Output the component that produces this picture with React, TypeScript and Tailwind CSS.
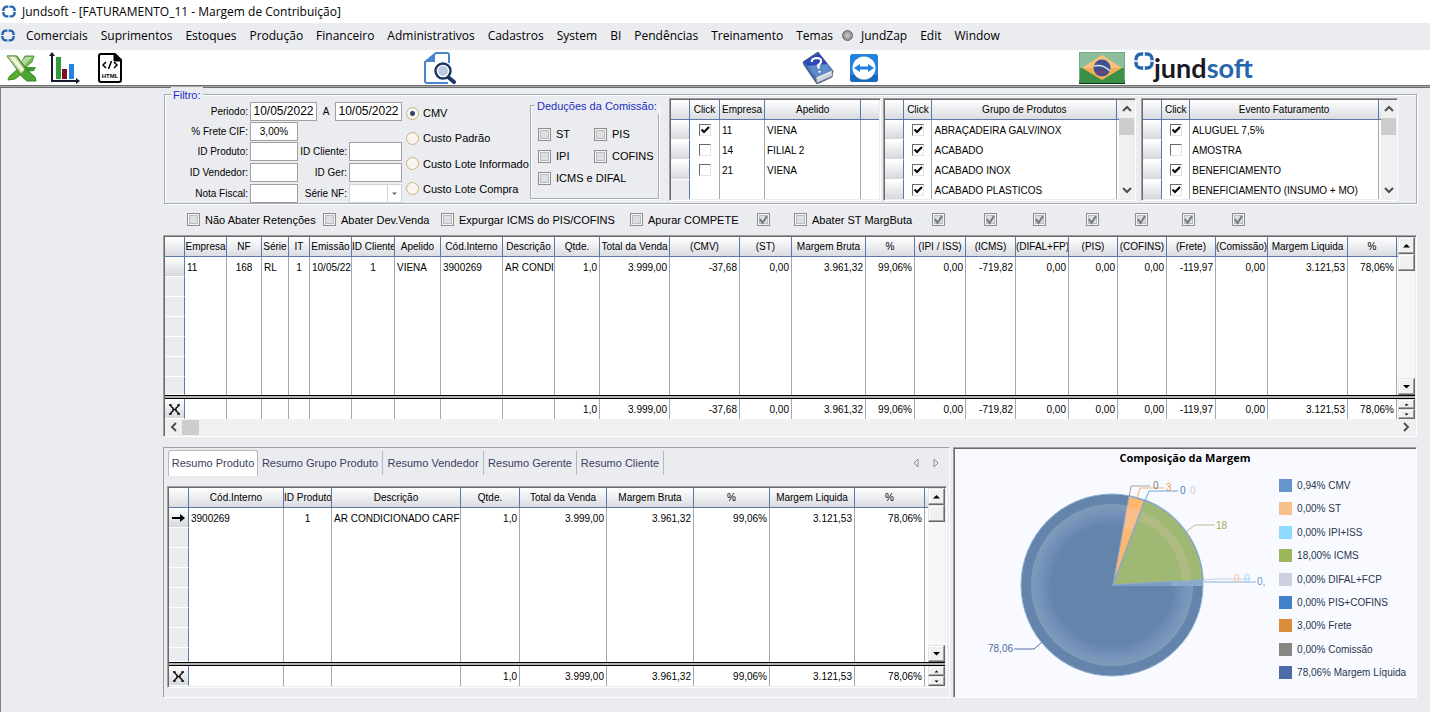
import { useId, type ReactNode } from 'react';
import clsx from 'clsx';

interface Column {
  title: string;
  width: string;
  align?: 'left' | 'center' | 'right';
}

interface DataGridProps {
  columns: Column[];
  rows: string[][];
  totals: string[];
  blankRows: number;
  lastRow: string;
  pointer?: boolean;
  horizontal?: boolean;
}

interface PickListProps {
  name: string;
  columns: Column[];
  rows: { checked: boolean; cells: string[] }[];
  scroll?: boolean;
  className: string;
}

const sunken =
  'border border-t-[#a0a0a0] border-l-[#a0a0a0] border-b-white border-r-white p-px shadow-[inset_1px_1px_0_#696969]';
const sans = 'font-["Liberation_Sans",sans-serif]';
const headCell =
  'h-5 overflow-hidden border-b border-r border-b-[#5b79a8] border-r-[#5b79a8] bg-linear-to-b from-white to-[#dadce1] p-0 text-center font-normal leading-[19px] whitespace-nowrap';
const bodyCell = 'overflow-hidden border-r border-[#a0a8b6] px-[2px] pt-px pb-0 leading-[19px] whitespace-nowrap';
const alignment = { left: 'text-left', center: 'text-center', right: 'text-right' };

const menu = [
  'Comerciais', 'Suprimentos', 'Estoques', 'Produção', 'Financeiro', 'Administrativos',
  'Cadastros', 'System', 'BI', 'Pendências', 'Treinamento', 'Temas',
];

const salesColumns: Column[] = [
  { title: 'Empresa', width: 'w-[42px]', align: 'left' },
  { title: 'NF', width: 'w-[35px]', align: 'center' },
  { title: 'Série', width: 'w-[27px]', align: 'left' },
  { title: 'IT', width: 'w-[21px]', align: 'center' },
  { title: 'Emissão', width: 'w-[42px]', align: 'left' },
  { title: 'ID Cliente', width: 'w-[43px]', align: 'center' },
  { title: 'Apelido', width: 'w-[46px]', align: 'left' },
  { title: 'Cód.Interno', width: 'w-[62px]', align: 'left' },
  { title: 'Descrição', width: 'w-[52px]', align: 'left' },
  { title: 'Qtde.', width: 'w-[45px]' },
  { title: 'Total da Venda', width: 'w-[70px]' },
  { title: '(CMV)', width: 'w-[70px]' },
  { title: '(ST)', width: 'w-[52px]' },
  { title: 'Margem Bruta', width: 'w-[74px]' },
  { title: '%', width: 'w-[49px]' },
  { title: '(IPI / ISS)', width: 'w-[51px]' },
  { title: '(ICMS)', width: 'w-[50px]' },
  { title: '(DIFAL+FP)', width: 'w-[53px]' },
  { title: '(PIS)', width: 'w-[49px]' },
  { title: '(COFINS)', width: 'w-[49px]' },
  { title: '(Frete)', width: 'w-[49px]' },
  { title: '(Comissão)', width: 'w-[52px]' },
  { title: 'Margem Liquida', width: 'w-[80px]' },
  { title: '%', width: 'w-[49px]' },
];

const salesValues = [
  '1,0', '3.999,00', '-37,68', '0,00', '3.961,32', '99,06%', '0,00', '-719,82',
  '0,00', '0,00', '0,00', '-119,97', '0,00', '3.121,53', '78,06%',
];

const productColumns: Column[] = [
  { title: 'Cód.Interno', width: 'w-[95px]', align: 'left' },
  { title: 'ID Produto', width: 'w-[48px]', align: 'center' },
  { title: 'Descrição', width: 'w-[129px]', align: 'left' },
  { title: 'Qtde.', width: 'w-[59px]' },
  { title: 'Total da Venda', width: 'w-[87px]' },
  { title: 'Margem Bruta', width: 'w-[87px]' },
  { title: '%', width: 'w-[76px]' },
  { title: 'Margem Liquida', width: 'w-[85px]' },
  { title: '%', width: 'w-[70px]' },
];

const productValues = ['1,0', '3.999,00', '3.961,32', '99,06%', '3.121,53', '78,06%'];

const legend = [
  { label: '0,94% CMV', color: 'bg-[#6796cf]' },
  { label: '0,00% ST', color: 'bg-[#f9bf8a]' },
  { label: '0,00% IPI+ISS', color: 'bg-[#8fdbff]' },
  { label: '18,00% ICMS', color: 'bg-[#9fb75c]' },
  { label: '0,00% DIFAL+FCP', color: 'bg-[#cbd1df]' },
  { label: '0,00% PIS+COFINS', color: 'bg-[#4083ca]' },
  { label: '3,00% Frete', color: 'bg-[#da8d39]' },
  { label: '0,00% Comissão', color: 'bg-[#868885]' },
  { label: '78,06% Margem Líquida', color: 'bg-[#4e6ca6]' },
];

function RingMark({ className }: { className: string }) {
  return (
    <svg viewBox="0 0 20 18" className={className} fill="none" stroke="#2565ae" strokeWidth="3.4">
      <path d="M9.200 2H7a5 5 0 0 0-5 5v1.200M10.800 2H13a5 5 0 0 1 5 5v1.200M9.200 16H7a5 5 0 0 1-5-5V9.800M10.800 16H13a5 5 0 0 0 5-5V9.800" />
    </svg>
  );
}

function ExcelIcon() {
  return (
    <svg viewBox="0 0 32 32" className="size-8">
      <path d="M20 4h9l-2 6-6 5H14z" fill="#7cb862" stroke="#4c9a34" />
      <path d="M21 5h6L17 16l-4-3z" fill="#b7d9a0" />
      <path d="M19 15h12l-2 4-8 1z" fill="#3f9a35" />
      <path d="M15 15l4 5-9 7-7 1q0-3 3-5z" fill="#5dad2c" stroke="#3d8d24" />
      <path d="M2 4h10l10 14 8 7 1 4h-9q-5-3-9-10z" fill="#4aa52e" stroke="#2d8426" />
      <path d="M2 4h9l9 13-4 5z" fill="#c6dba6" stroke="#76a155" />
      <path d="M5 5h4l10 13-2 2z" fill="#f3f6dd" />
    </svg>
  );
}

function ChartIcon() {
  return (
    <svg viewBox="0 0 32 32" className="size-8">
      <path d="M8 5h5v22H8z" fill="#2f9e38" />
      <path d="M14 17h5v10h-5z" fill="#7d1027" />
      <path d="M21 12h5v15h-5z" fill="#2386dc" />
      <path d="M4 3v26h25" fill="none" stroke="#151b2b" strokeWidth="2" />
      <path d="M1 4l3-4 3 4zM28 26l4 3-4 3z" fill="#151b2b" />
    </svg>
  );
}

function HtmlIcon() {
  return (
    <svg viewBox="0 0 24 32" className="h-8 w-6">
      <path d="M3 2h14l6 6v20q0 2-2 2H3q-2 0-2-2V4q0-2 2-2z" fill="#fff" stroke="#000" strokeWidth="2" />
      <path d="M16 2v7h7" fill="#000" stroke="#000" />
      <path d="M8 10l-3 3 3 3M16 10l3 3-3 3M13.500 9l-3 8" fill="none" stroke="#000" strokeWidth="1.500" />
      <text x="12" y="26" textAnchor="middle" fontSize="6" fontWeight="700" fontFamily="Liberation Sans, sans-serif">HTML</text>
    </svg>
  );
}

function SearchPageIcon() {
  return (
    <svg viewBox="0 0 32 32" className="size-8">
      <path d="M25 11V3q0-2-2-2h-11L1 10v19q0 2 2 2h21" fill="#fff" stroke="#4686c9" strokeWidth="2" />
      <path d="M11 1v9H1z" fill="#4686c9" />
      <circle cx="19" cy="19" r="9.500" fill="#fff" />
      <path d="M24 25l6 5" stroke="#1c3765" strokeWidth="4" strokeLinecap="round" />
      <circle cx="19" cy="19" r="7.500" fill="#fff" stroke="#1c3765" strokeWidth="2.400" />
      <circle cx="19" cy="19" r="5" fill="#bccbdc" />
    </svg>
  );
}

function HelpBookIcon() {
  return (
    <svg viewBox="0 0 32 32" className="size-8">
      <path d="M1 10L16 0l15 19-1 6-15 7L2 13z" fill="#4570b8" stroke="#333e62" strokeWidth=".8" />
      <path d="M14 25l16-7 .5 6L15 31z" fill="#e3e6ec" stroke="#777c88" strokeWidth=".7" />
      <path d="M2 10L16 1l14 17-16 7z" fill="#2d48b4" />
      <path d="M5 14l20-2 5 6-16 7z" fill="#5f8bc8" />
      <path d="M15 28l15-7M15 30l15-7" stroke="#a7acb7" strokeWidth=".6" />
      <path d="M10 10q-1-3 4-4 6 0 5 4-1 2-3 3.500l1 3M17 19l1 1.500" fill="none" stroke="#fff" strokeWidth="2.200" />
    </svg>
  );
}

function RemoteIcon() {
  return (
    <svg viewBox="0 0 28 28" className="size-7">
      <rect width="28" height="28" rx="3" fill="#2282dc" />
      <path d="M0 21h28v4q0 3-3 3H3q-3 0-3-3z" fill="#1768bb" />
      <circle cx="14" cy="14" r="11.500" fill="#fff" />
      <path d="M4 14l6-4v2.500h8V10l6 4-6 4v-2.500h-8V18z" fill="#1f7fda" />
    </svg>
  );
}

function FlagIcon() {
  return (
    <svg viewBox="0 0 46 32" className="h-8 w-[46px]">
      <rect width="46" height="32" fill="#399046" />
      <path d="M1 1h44v15H1z" fill="#8dbd9c" />
      <path d="M23 3l20 13-20 12L3 16z" fill="#f3ad55" />
      <path d="M23 3l20 13H3z" fill="#f6c37d" />
      <circle cx="23" cy="16" r="8.500" fill="#3f4f8f" />
      <path d="M15 14q9-2 16 5" fill="none" stroke="#dbe4ee" strokeWidth="1.500" />
      <path d="M18 21q5-3 9 0" fill="none" stroke="#8c3d65" strokeWidth="2" />
      <path d="M.5 28V.5h45V28" fill="none" stroke="#76ad86" />
      <path d="M0 31.500h46" stroke="#12301c" />
    </svg>
  );
}

interface CheckProps {
  label?: string;
  name?: string;
  checked?: boolean;
  className?: string;
}

function Check({ label, name, checked = false, className }: CheckProps) {
  return (
    <label className={clsx('flex items-center gap-[5px] text-[11px] leading-4 whitespace-nowrap', className)}>
      <span className="grid size-[13px] shrink-0">
        <input
          type="checkbox"
          defaultChecked={checked}
          aria-label={name}
          className="peer col-start-1 row-start-1 size-[13px] appearance-none border border-[#8e8f8f] bg-[#dcdee0] shadow-[inset_0_0_0_1px_#f4f4f4,inset_0_0_0_2px_#b9bcc0]"
        />
        <svg viewBox="0 0 13 13" className="pointer-events-none invisible col-start-1 row-start-1 peer-checked:visible">
          <path d="M3 6l2.500 4L10 3" fill="none" stroke="#75787c" strokeWidth="2" />
        </svg>
      </span>
      {label}
    </label>
  );
}

function GridCheck({ checked, name }: { checked: boolean; name: string }) {
  return (
    <span className="mx-auto grid size-3">
      <input
        type="checkbox"
        defaultChecked={checked}
        aria-label={name}
        className="peer col-start-1 row-start-1 size-3 appearance-none border border-t-[#696969] border-r-[#e3e3e3] border-b-[#e3e3e3] border-l-[#696969] bg-white"
      />
      <svg viewBox="0 0 12 12" className="pointer-events-none invisible col-start-1 row-start-1 peer-checked:visible">
        <path d="M2.500 5.500l2.500 2.500 5-5" fill="none" stroke="#000" strokeWidth="2" />
      </svg>
    </span>
  );
}

function Arrow({ d, fill = '#000' }: { d: string; fill?: string }) {
  return (
    <svg viewBox="0 0 9 9" className="size-[9px]">
      <path d={d} fill={fill} />
    </svg>
  );
}

const raised =
  'flex items-center justify-center border border-t-[#e3e3e3] border-l-[#e3e3e3] border-b-[#696969] border-r-[#696969] bg-[#f0f0f0] shadow-[inset_-1px_-1px_0_#a0a0a0,inset_1px_1px_0_#fff]';

function ClassicScroll() {
  return (
    <div className="flex w-[17px] shrink-0 flex-col">
      <div className="flex flex-1 flex-col bg-[#f7f7f7]">
        <button type="button" aria-label="Acima" className={clsx(raised, 'h-[17px]')}>
          <Arrow d="M1 6.500L4.500 3 8 6.500z" />
        </button>
        <div className={clsx(raised, 'h-[17px]')} />
        <button type="button" aria-label="Abaixo" className={clsx(raised, 'mt-auto h-[17px]')}>
          <Arrow d="M1 3L4.500 6.500 8 3z" />
        </button>
      </div>
      <div className="h-1 border-y border-black bg-[#b4b4b4]" />
      <button type="button" aria-label="Anterior" className={clsx(raised, 'h-[10px]')}>
        <Arrow d="M2.500 5.500L4.500 3.500 6.500 5.500z" />
      </button>
      <button type="button" aria-label="Próximo" className={clsx(raised, 'h-[10px]')}>
        <Arrow d="M2.500 3.500L4.500 5.500 6.500 3.500z" />
      </button>
    </div>
  );
}

function Chevron({ d }: { d: string }) {
  return (
    <svg viewBox="0 0 10 10" className="size-[10px]">
      <path d={d} fill="none" stroke="#505050" strokeWidth="2" />
    </svg>
  );
}

function DataGrid({ columns, rows, totals, blankRows, lastRow, pointer, horizontal }: DataGridProps) {
  const selector = 'border-r border-r-[#5b79a8] border-b border-b-white p-0';

  return (
    <div className={clsx(sunken, sans, 'text-[10px]')}>
      <div className="flex">
        <table className="w-full min-w-0 table-fixed border-separate border-spacing-0 bg-white">
          <colgroup>
            <col className="w-[20px]" />
            {columns.map((c, i) => (
              <col key={i} className={c.width} />
            ))}
            <col />
          </colgroup>
          <thead>
            <tr>
              <th className={headCell} />
              {columns.map((c, i) => (
                <th key={i} className={headCell}>{c.title}</th>
              ))}
              <th className={clsx(headCell, 'border-r-0')} />
            </tr>
          </thead>
          <tbody>
            {rows.map((row, r) => (
              <tr key={r} className="h-5">
                <td className={clsx(selector, 'bg-linear-to-b from-white to-[#d6d8dd]')}>
                  {pointer && (
                    <svg viewBox="0 0 19 19" className="h-[19px] w-[19px]">
                      <path d="M3 9h8V6l5 4-5 4v-3H3z" />
                    </svg>
                  )}
                </td>
                {row.map((value, i) => (
                  <td key={i} className={clsx(bodyCell, alignment[columns[i].align ?? 'right'])}>{value}</td>
                ))}
                <td className="p-0" />
              </tr>
            ))}
            {Array.from({ length: blankRows + 1 }, (_, r) => (
              <tr key={r} className={r === blankRows ? lastRow : 'h-5'}>
                <td className={clsx(selector, 'bg-[#ebecf0]')} />
                {columns.map((_, i) => (
                  <td key={i} className={bodyCell} />
                ))}
                <td className="p-0" />
              </tr>
            ))}
          </tbody>
          <tfoot>
            <tr className="h-1">
              <td colSpan={columns.length + 2} className="border-y border-black bg-[#b4b4b4] p-0" />
            </tr>
            <tr className="h-5">
              <td className={clsx(selector, 'bg-linear-to-b from-white to-[#d6d8dd]')}>
                <svg viewBox="0 0 19 19" className="h-[19px] w-[19px]" fill="none" stroke="#000" strokeWidth="1.400">
                  <path d="M4 6h2v1.500l2 1.500v3l-2 1.500V15H4M15 6h-2v1.500l-2 1.500v3l2 1.500V15h2M8 10.500h3" />
                </svg>
              </td>
              {totals.map((value, i) => (
                <td key={i} className={clsx(bodyCell, 'text-right')}>{value}</td>
              ))}
              <td className="p-0" />
            </tr>
          </tfoot>
        </table>
        <ClassicScroll />
      </div>
      {horizontal && (
        <div className="flex h-4 items-center bg-[#f0f0f0] pr-1">
          <span className="flex w-[17px] justify-center">
            <Chevron d="M7 1L3 5l4 4" />
          </span>
          <span className="h-[15px] w-[17px] bg-[#cdcdcd]" />
          <span className="ml-auto">
            <Chevron d="M3 1l4 4-4 4" />
          </span>
        </div>
      )}
    </div>
  );
}

function PickList({ name, columns, rows, scroll, className }: PickListProps) {
  return (
    <div className={clsx(sunken, 'mt-[3px] flex h-[103px] min-w-0 overflow-hidden text-[10px]', className)}>
      <div className="min-w-0 flex-1 overflow-hidden bg-white">
        <table className="w-full table-fixed border-separate border-spacing-0" aria-label={name}>
          <colgroup>
            <col className="w-[19px]" />
            {columns.map((c) => (
              <col key={c.title} className={c.width} />
            ))}
            <col className={scroll ? 'w-[2px]' : 'w-[18px]'} />
          </colgroup>
          <thead>
            <tr>
              <th className={headCell} />
              {columns.map((c) => (
                <th key={c.title} className={headCell}>{c.title}</th>
              ))}
              <th className={clsx(headCell, 'border-r-0')} />
            </tr>
          </thead>
          <tbody>
            {rows.map(({ checked, cells }, r) => (
              <tr key={r} className="h-5">
                <td
                  className={clsx(
                    'border-r border-b border-r-[#5b79a8] border-b-white p-0',
                    cells[0] ? 'bg-linear-to-b from-white to-[#d6d8dd]' : 'bg-[#ebecf0]',
                  )}
                />
                <td className="border-r border-[#a0a8b6] p-0">
                  {cells[0] && <GridCheck checked={checked} name={cells.join(' ')} />}
                </td>
                {cells.map((value, i) => (
                  <td key={i} className={bodyCell}>{value}</td>
                ))}
                <td className="p-0" />
              </tr>
            ))}
          </tbody>
        </table>
      </div>
      {scroll && (
        <div className="flex w-[15px] shrink-0 flex-col items-center bg-[#f0f0f0] py-1">
          <Chevron d="M1 7l4-4 4 4" />
          <span className="mt-1 h-[17px] w-[15px] bg-[#cdcdcd]" />
          <span className="mt-auto">
            <Chevron d="M1 3l4 4 4-4" />
          </span>
        </div>
      )}
    </div>
  );
}

function Field({ label, value, second }: { label: string; value?: string; second?: boolean }) {
  const id = useId();
  return (
    <>
      <label htmlFor={id} className={clsx('text-right whitespace-nowrap', second ? 'flex-1' : 'w-[83px]')}>
        {label}
      </label>
      <input
        id={id}
        defaultValue={value}
        className={clsx('h-[19px] border border-[#a0a0a0] bg-white text-center', second ? 'w-[53px]' : 'w-[48px]')}
      />
    </>
  );
}

function FilterRow({ children }: { children: ReactNode }) {
  return <div className="flex items-center gap-[2px]">{children}</div>;
}

function Filters() {
  const dateBox = 'h-[19px] w-[67px] border border-[#a0a0a0] bg-white text-center text-[12px]';
  return (
    <fieldset className={clsx('relative ml-px flex border border-[#a5acb4] pr-[18px] shadow-[1px_1px_0_#fff,inset_1px_1px_0_#fff]', sans)}>
      <legend className="absolute -top-2 left-1.5 bg-[#ebecf0] px-0.5 text-[11px] leading-4 text-[#1c2fc4]">Filtro:</legend>

      <div className="mt-1.5 grid w-[237px] shrink-0 grid-rows-[20px_20px_21px_21px_20px] text-[10px]">
        <FilterRow>
          <label htmlFor="date-from" className="w-[83px] text-right">Periodo:</label>
          <input id="date-from" defaultValue="10/05/2022" className={dateBox} />
          <label htmlFor="date-to" className="flex-1 text-center">A</label>
          <input id="date-to" defaultValue="10/05/2022" className={dateBox} />
        </FilterRow>
        <FilterRow>
          <Field label="% Frete CIF:" value="3,00%" />
        </FilterRow>
        <FilterRow>
          <Field label="ID Produto:" />
          <Field label="ID Cliente:" second />
        </FilterRow>
        <FilterRow>
          <Field label="ID Vendedor:" />
          <Field label="ID Ger:" second />
        </FilterRow>
        <FilterRow>
          <Field label="Nota Fiscal:" />
          <label htmlFor="serie" className="flex-1 text-right">Série NF:</label>
          <span className="grid">
            <select id="serie" className="col-start-1 row-start-1 h-[19px] w-[53px] appearance-none border border-[#cfd3da] bg-white" />
            <span className="pointer-events-none col-start-1 row-start-1 my-px mr-px flex w-[14px] items-center justify-center justify-self-end border-l border-[#cfd3da]">
              <Arrow d="M2 3.500L4.500 6 7 3.500z" fill="#666" />
            </span>
          </span>
        </FilterRow>
      </div>

      <div className="ml-1 flex w-[124px] shrink-0 flex-col justify-between pt-2.5 pb-1.5 text-[11px]">
        {['CMV', 'Custo Padrão', 'Custo Lote Informado', 'Custo Lote Compra'].map((option, i) => (
          <label key={option} className="flex items-center gap-1 leading-4 whitespace-nowrap">
            <input
              type="radio"
              name="cost"
              defaultChecked={i === 0}
              className="size-[13px] shrink-0 appearance-none rounded-full border border-[#c9b184] bg-[#f7f5ee] checked:bg-[radial-gradient(#33456f_0_2px,#f7f5ee_3px)]"
            />
            {option}
          </label>
        ))}
      </div>

      <fieldset className="relative mt-2.5 mb-1 grid w-[129px] shrink-0 grid-cols-[56px_1fr] content-start gap-y-1.5 border border-[#a5acb4] pt-5 pl-[7px] shadow-[1px_1px_0_#fff,inset_1px_1px_0_#fff]">
        <legend className="absolute -top-2 left-1 bg-[#ebecf0] px-0.5 text-[11px] leading-4 whitespace-nowrap text-[#1c2fc4]">
          Deduções da Comissão:
        </legend>
        <Check label="ST" />
        <Check label="PIS" />
        <Check label="IPI" />
        <Check label="COFINS" />
        <Check label="ICMS e DIFAL" className="col-span-2" />
      </fieldset>

      <PickList
        name="Empresas"
        className="ml-2.5 flex-[212]"
        columns={[
          { title: 'Click', width: 'w-[30px]' },
          { title: 'Empresa', width: 'w-[45px]' },
          { title: 'Apelido', width: 'w-auto' },
        ]}
        rows={[
          { checked: true, cells: ['11', 'VIENA'] },
          { checked: false, cells: ['14', 'FILIAL 2'] },
          { checked: false, cells: ['21', 'VIENA'] },
          { checked: false, cells: ['', ''] },
        ]}
      />
      <PickList
        name="Grupo de Produtos"
        scroll
        className="ml-[2px] flex-[253]"
        columns={[
          { title: 'Click', width: 'w-[28px]' },
          { title: 'Grupo de Produtos', width: 'w-auto' },
        ]}
        rows={[
          { checked: true, cells: ['ABRAÇADEIRA GALV/INOX'] },
          { checked: true, cells: ['ACABADO'] },
          { checked: true, cells: ['ACABADO INOX'] },
          { checked: true, cells: ['ACABADO PLASTICOS'] },
        ]}
      />
      <PickList
        name="Evento Faturamento"
        scroll
        className="ml-[5px] flex-[257]"
        columns={[
          { title: 'Click', width: 'w-[28px]' },
          { title: 'Evento Faturamento', width: 'w-auto' },
        ]}
        rows={[
          { checked: true, cells: ['ALUGUEL 7,5%'] },
          { checked: false, cells: ['AMOSTRA'] },
          { checked: true, cells: ['BENEFICIAMENTO'] },
          { checked: true, cells: ['BENEFICIAMENTO (INSUMO + MO)'] },
        ]}
      />
    </fieldset>
  );
}

function MarginChart() {
  return (
    <svg viewBox="0 0 312 224" className="h-[224px] w-[312px] shrink-0" fontFamily="Liberation Sans, sans-serif" fontSize="10">
      <defs>
        <radialGradient id="disc">
          <stop offset="0" stopColor="#6484ab" />
          <stop offset=".74" stopColor="#6484ab" />
          <stop offset=".86" stopColor="#738fb9" />
          <stop offset="1" stopColor="#809cb9" />
        </radialGradient>
      </defs>
      <circle cx="157" cy="116" r="91" fill="#6484ab" stroke="#8fb3d6" />
      <circle cx="157" cy="116" r="81" fill="url(#disc)" />
      <path d="M158 116L174 27l16 5z" fill="#fdb76e" stroke="#8aa8cc" />
      <path d="M172 38l13 4-8 19-8-2z" fill="#f9bf8a" />
      <path d="M158 116L190 31A91 91 0 0 1 248 111z" fill="#9fb974" stroke="#8aa8cc" strokeWidth="1.500" />
      <path d="M185 47A75 75 0 0 1 232 112" fill="none" stroke="#b0bb84" strokeWidth="9" />
      <path d="M158 116l90-5v6h-90z" fill="#8caace" />
      <path d="M158 116l59-3v4h-59z" fill="#7f9cc6" />
      <g fill="none">
        <path d="M174 28l2-11h19" stroke="#a0a3a7" />
        <path d="M182 29l3-10h24" stroke="#efb46f" />
        <path d="M190 32l4-10h29" stroke="#70a4d8" />
        <path d="M231 63l9-7h20" stroke="#b5bd91" />
        <path d="M86 174l-7 6H59" stroke="#4e6ca6" />
        <path d="M249 111l10-1h37" stroke="#bed3ec" />
        <path d="M249 113h52" stroke="#86aedc" />
      </g>
      <g>
        <text x="198" y="20" fill="#777c78">0</text>
        <text x="211" y="22" fill="#e59c49">3</text>
        <text x="225" y="25" fill="#4083ca">0</text>
        <text x="235" y="25" fill="#cbd1df">0</text>
        <text x="261" y="60" fill="#9fa95c">18</text>
        <text x="279" y="113" fill="#f9bf8a">0</text>
        <text x="289" y="113" fill="#8fdbff">0</text>
        <text x="302" y="116" fill="#6796cf">0,</text>
        <text x="33" y="183" fill="#4e6ca6">78,06</text>
      </g>
    </svg>
  );
}

export default function App() {
  return (
    <div className="flex min-h-screen flex-col bg-[#ebecf0] font-['Open_Sans',sans-serif] text-[12px] text-black">
      <header>
        <div className="flex h-[23px] items-center gap-1.5 bg-white pl-0.5">
          <RingMark className="h-[13px] w-[14px]" />
          <h1>Jundsoft - [FATURAMENTO_11 - Margem de Contribuição]</h1>
        </div>
        <nav className="flex h-[27px] items-center gap-[13px] pb-[2px] pl-px">
          <RingMark className="-mr-0.5 h-[13px] w-[14px]" />
          {menu.map((item) => (
            <button key={item} type="button">{item}</button>
          ))}
          <button type="button" className="-ml-1 flex items-center gap-2">
            <span className="size-[11px] rounded-full border border-[#666] bg-[radial-gradient(#ccc,#777)]" />
            JundZap
          </button>
          <button type="button">Edit</button>
          <button type="button">Window</button>
        </nav>
        <div className="flex h-[35px] items-center bg-white pl-[5px]">
          <button type="button" aria-label="Excel"><ExcelIcon /></button>
          <button type="button" aria-label="Gráfico" className="ml-[11px]"><ChartIcon /></button>
          <button type="button" aria-label="HTML" className="ml-[18px]"><HtmlIcon /></button>
          <button type="button" aria-label="Pesquisar" className="ml-[302px]"><SearchPageIcon /></button>
          <button type="button" aria-label="Ajuda" className="ml-[346px]"><HelpBookIcon /></button>
          <button type="button" aria-label="Suporte remoto" className="ml-4"><RemoteIcon /></button>
          <button type="button" aria-label="Português" className="ml-[201px]"><FlagIcon /></button>
          <div className="ml-[9px] flex items-start">
            <RingMark className="h-[18px] w-5" />
            <span className="font-['Lato',sans-serif] text-[27px] leading-8 font-bold text-[#191724]">
              jund<span className="text-[#2565ae]">soft</span>
            </span>
          </div>
        </div>
        <div className="h-[3px] border-y border-[#6b6e6c] bg-[#a5a8a6]" />
      </header>

      <main className="flex-1 border-l border-[#808080] pt-1.5 pr-[13px] pl-[162px]">
        <Filters />

        <div className={clsx('flex h-[31px] items-center pl-6', sans)}>
          <Check label="Não Abater Retenções" className="w-[136px]" />
          <Check label="Abater Dev.Venda" className="w-[118px]" />
          <Check label="Expurgar ICMS do PIS/COFINS" className="w-[189px]" />
          <Check label="Apurar COMPETE" className="w-[127px]" />
          <Check name="(ST)" checked className="w-[37px]" />
          <Check label="Abater ST MargButa" className="w-[138px]" />
          <Check name="(IPI / ISS)" checked className="w-[52px]" />
          <Check name="(ICMS)" checked className="w-[49px]" />
          <Check name="(DIFAL+FP)" checked className="w-[53px]" />
          <Check name="(PIS)" checked className="w-[49px]" />
          <Check name="(COFINS)" checked className="w-[47px]" />
          <Check name="(Frete)" checked className="w-[50px]" />
          <Check name="(Comissão)" checked />
        </div>

        <DataGrid
          columns={salesColumns}
          rows={[['11', '168', 'RL', '1', '10/05/22', '1', 'VIENA', '3900269', 'AR CONDI', ...salesValues]]}
          totals={['', '', '', '', '', '', '', '', '', ...salesValues]}
          blankRows={5}
          lastRow="h-[18px]"
          horizontal
        />

        <div className="mt-2.5 flex gap-[3px]">
          <section className="min-w-0 flex-[787] border border-t-[#a0a0a0] border-r-white border-b-white border-l-[#a0a0a0] pt-[2px] pr-[2px] pb-[9px] pl-[3px]">
            <div className={clsx('flex h-[26px] items-stretch pl-px text-[11px] whitespace-nowrap text-[#3a4060]', sans)} role="tablist">
              <button type="button" role="tab" aria-selected className="w-[90px] rounded-t-[3px] border border-b-0 border-[#b4b8c0] bg-white">
                Resumo Produto
              </button>
              <button type="button" role="tab" className="my-px w-[125px] border-r border-[#b4b8c0]">Resumo Grupo Produto</button>
              <button type="button" role="tab" className="my-px w-[101px] border-r border-[#b4b8c0]">Resumo Vendedor</button>
              <button type="button" role="tab" className="my-px w-[93px] border-r border-[#b4b8c0]">Resumo Gerente</button>
              <button type="button" role="tab" className="my-px w-[87px] border-r border-[#b4b8c0]">Resumo Cliente</button>
              <svg viewBox="0 0 26 10" className="mr-2 ml-auto h-[10px] w-[26px] self-center" fill="none" stroke="#8a8d93">
                <path d="M5 1v8L1 5zM21 1v8l4-4z" />
              </svg>
            </div>
            <div className="mt-[10px]">
              <DataGrid
                columns={productColumns}
                rows={[['3900269', '1', 'AR CONDICIONADO CARF', ...productValues]]}
                totals={['', '', '', ...productValues]}
                blankRows={6}
                lastRow="h-[14px]"
                pointer
              />
            </div>
          </section>

          <section className={clsx(sunken, 'flex min-w-0 flex-[464] flex-col bg-[#f9faff]')}>
            <h2 className="pt-px text-center text-[11px] leading-4 font-bold">Composição da Margem</h2>
            <div className="flex pt-[3px]">
              <MarginChart />
              <ul className='ml-3 flex h-[210px] flex-col justify-between pt-2.5 font-["Liberation_Sans",sans-serif] text-[10px] leading-[13px] text-[#27364f]'>
                {legend.map(({ label, color }) => (
                  <li key={label} className="flex items-center gap-[5px] whitespace-nowrap">
                    <span className={clsx('size-[13px]', color)} />
                    {label}
                  </li>
                ))}
              </ul>
            </div>
          </section>
        </div>
      </main>
    </div>
  );
}
